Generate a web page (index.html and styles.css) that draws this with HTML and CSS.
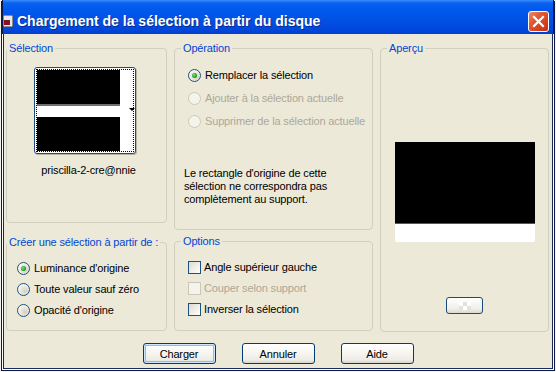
FILE: index.html
```html
<!DOCTYPE html>
<html lang="fr">
<head>
<meta charset="utf-8">
<title>Chargement de la sélection à partir du disque</title>
<link rel="stylesheet" href="styles.css">
</head>
<body>
<div class="window">
  <div class="titlebar">
    <svg class="app-icon" width="10" height="12" viewBox="0 0 10 12">
      <rect x="0" y="0" width="10" height="12" fill="#e8e8f0" stroke="#333" stroke-width="1"/>
      <rect x="1" y="5" width="6" height="5" fill="#8a1020"/>
    </svg>
    <span class="title">Chargement de la sélection à partir du disque</span>
    <button class="close" aria-label="Fermer">
      <svg width="13" height="13" viewBox="0 0 13 13"><path d="M2 2 L11 11 M11 2 L2 11" stroke="#fff" stroke-width="2.2" stroke-linecap="square"/></svg>
    </button>
  </div>

  <div class="content">
    <div class="col">
      <fieldset class="group g-selection">
        <legend>Sélection</legend>
        <div class="thumb">
          <div class="thumb-focus">
            <div class="thumb-img">
              <div class="blk"></div>
              <div class="gap"></div>
              <div class="blk"></div>
            </div>
            <div class="thumb-side"><span class="arrow"></span></div>
          </div>
        </div>
        <div class="thumb-name">priscilla-2-cre@nnie</div>
      </fieldset>

      <fieldset class="group g-create">
        <legend>Créer une sélection à partir de :</legend>
        <div class="opts tight">
          <label class="opt"><span class="radio checked"></span>Luminance d'origine</label>
          <label class="opt"><span class="radio"></span>Toute valeur sauf zéro</label>
          <label class="opt"><span class="radio"></span>Opacité d'origine</label>
        </div>
      </fieldset>
    </div>

    <div class="col">
      <fieldset class="group g-operation">
        <legend>Opération</legend>
        <div class="opts wide">
          <label class="opt"><span class="radio checked"></span>Remplacer la sélection</label>
          <label class="opt disabled"><span class="radio"></span>Ajouter à la sélection actuelle</label>
          <label class="opt disabled"><span class="radio"></span>Supprimer de la sélection actuelle</label>
        </div>
        <p class="note">Le rectangle d'origine de cette sélection ne correspondra pas complètement au support.</p>
      </fieldset>

      <fieldset class="group g-options">
        <legend>Options</legend>
        <div class="opts tight">
          <label class="opt"><span class="check"></span>Angle supérieur gauche</label>
          <label class="opt disabled"><span class="check"></span>Couper selon support</label>
          <label class="opt"><span class="check"></span>Inverser la sélection</label>
        </div>
      </fieldset>
    </div>

    <div class="col">
      <fieldset class="group g-preview">
        <legend>Aperçu</legend>
        <div class="preview">
          <div class="preview-black"></div>
          <div class="preview-white"></div>
        </div>
        <button class="mini" aria-label="Arrière-plan"><span class="checker"></span></button>
      </fieldset>
    </div>
  </div>

  <div class="buttons">
    <button class="btn default">Charger</button>
    <button class="btn">Annuler</button>
    <button class="btn">Aide</button>
  </div>
</div>
</body>
</html>
```

FILE: styles.css
```css
* { box-sizing: border-box; }

html, body {
  margin: 0;
  padding: 0;
  background: #ece9d8;
}

body {
  font-family: "Liberation Sans", Arial, sans-serif;
  font-size: 11px;
  letter-spacing: -0.15px;
  color: #000;
}

.window {
  width: 556px;
  height: 372px;
  background: #ece9d8;
  padding: 0 4px 4px 4px;
  box-shadow:
    inset 0 0 0 1px #f4f3ee,
    inset 0 0 0 2px #0b1a4a,
    inset 0 0 0 3px #ffffff,
    inset 0 0 0 4px #1a2a5a;
  display: flex;
  flex-direction: column;
}

.titlebar {
  height: 34px;
  margin: 0 -2px;
  background: linear-gradient(#3a8cff 0px, #0a62f0 3px, #0058ee 9px, #0054e6 50%, #004ae0 80%, #0040d0 100%);
  display: flex;
  align-items: center;
  padding: 8px 4px 0 0;
  color: #fff;
  border-left: 1px solid #0b1a4a;
  border-right: 1px solid #0b1a4a;
}

.app-icon {
  margin-left: 0;
  margin-right: 4px;
  flex: none;
}

.title {
  font-family: "Liberation Sans", Arial, sans-serif;
  font-weight: bold;
  font-size: 14px;
  letter-spacing: 0;
  text-shadow: 1px 1px 0 #0a2a8a;
  flex: 1;
  white-space: nowrap;
}

.close {
  width: 21px;
  height: 21px;
  margin-right: 0;
  padding: 0;
  border: 1px solid #fff;
  border-radius: 3px;
  background: linear-gradient(135deg, #f08a6c 0%, #e25a36 35%, #d4401c 70%, #c03010 100%);
  display: flex;
  align-items: center;
  justify-content: center;
}

.content {
  display: grid;
  grid-template-columns: 161px 199px 169px;
  column-gap: 7px;
  padding: 8px 0 0 2px;
}

.col {
  display: flex;
  flex-direction: column;
}

.group {
  margin: 0;
  padding: 0;
  min-width: 0;
  border: 1px solid #d0d0bf;
  border-radius: 4px;
}

.group legend {
  color: #0046d5;
  padding: 0 2px;
  margin-left: 0;
  line-height: 13px;
  white-space: nowrap;
}

.g-selection { height: 181px; display: flex; flex-direction: column; align-items: center; }
.g-create    { height: 95px; margin-top: 13px; padding: 13px 0 0 10px; }
.g-create legend { margin-left: -10px; }
.g-operation { height: 188px; padding: 14px 0 0 13px; }
.g-operation legend, .g-options legend { margin-left: -7px; }
.g-options   { height: 96px; margin-top: 5px; padding: 13px 0 0 13px; }
.g-preview   { height: 290px; }
.g-preview legend { margin-left: 6px; }

/* thumbnail */
.thumb {
  margin-top: 12px;
  margin-right: 3px;
  width: 102px;
  height: 87px;
  border: 1px solid #24487a;
  border-radius: 3px;
  background: #fff;
  padding: 1px;
  box-shadow: 1px 1px 0 #b8b4a4;
}
.thumb-focus {
  height: 100%;
  border: 1px dotted #000;
  display: flex;
}
.thumb-img {
  width: 83px;
  display: flex;
  flex-direction: column;
}
.blk { background: #000; height: 34px; }
.gap { flex: 1; background: #fff; border-top: 2px solid #707070; }
.thumb-side {
  flex: 1;
  position: relative;
  background: linear-gradient(90deg, #fff 0, #fff 8px, #f4f4f4 100%);
}
.arrow {
  position: absolute;
  left: 9px;
  top: 38px;
  width: 0;
  height: 0;
  border-left: 3px solid transparent;
  border-right: 3px solid transparent;
  border-top: 3px solid #000;
}
.thumb-name {
  margin-top: 10px;
  margin-left: 4px;
  line-height: 13px;
}

/* options */
.opts {
  display: flex;
  flex-direction: column;
}
.opts.tight { row-gap: 8px; }
.opts.wide { row-gap: 10px; }

.opt {
  display: flex;
  align-items: center;
  height: 13px;
  line-height: 13px;
  white-space: nowrap;
}
.opt.disabled { color: #aca899; }

.radio {
  width: 13px;
  height: 13px;
  border-radius: 50%;
  border: 1px solid #1c5180;
  background: radial-gradient(circle at 65% 65%, #d4d0c0 0%, #ecebe4 50%, #ffffff 90%);
  margin-right: 4px;
  flex: none;
  display: flex;
  align-items: center;
  justify-content: center;
}
.radio.checked::after {
  content: "";
  width: 5px;
  height: 5px;
  border-radius: 50%;
  background: radial-gradient(circle at 40% 40%, #7be37b 0%, #21a121 60%, #1a8a1a 100%);
}
.opt.disabled .radio,
.opt.disabled .check {
  border-color: #cac8bb;
  background: #f5f4ea;
}

.check {
  width: 13px;
  height: 13px;
  border: 1px solid #1c5180;
  background: linear-gradient(135deg, #dcdad0 0%, #f2f1ea 60%, #ffffff 100%);
  margin-right: 3px;
  flex: none;
}

.note {
  margin: 39px 0 0 -4px;
  line-height: 13px;
  width: 180px;
}

/* preview */
.g-preview {
  display: flex;
  flex-direction: column;
  align-items: center;
}
.preview {
  margin-top: 87px;
  width: 140px;
}
.preview-black { height: 82px; background: #000; border-bottom: 1px solid #555; }
.preview-white { height: 18px; background: #fff; border-radius: 0 0 2px 2px; }

.mini {
  margin-top: 55px;
  width: 37px;
  height: 17px;
  padding: 0;
  border: 1px solid #1f4a7c;
  border-radius: 3px;
  background: linear-gradient(#ffffff, #f0efe8 70%, #dcdad0);
  display: flex;
  align-items: center;
  justify-content: center;
}
.checker {
  width: 12px;
  height: 8px;
  background:
    linear-gradient(#fff, #fff) 0 0 / 4px 4px no-repeat,
    linear-gradient(#fff, #fff) 8px 0 / 4px 4px no-repeat,
    linear-gradient(#fff, #fff) 4px 4px / 4px 4px no-repeat,
    #e4e2da;
}

/* dialog buttons */
.buttons {
  display: flex;
  justify-content: center;
  column-gap: 26px;
  margin-top: 11px;
}
.btn {
  width: 73px;
  height: 21px;
  padding: 0;
  font-family: "Liberation Sans", Arial, sans-serif;
  font-size: 11px;
  letter-spacing: -0.15px;
  color: #000;
  border: 1px solid #003c74;
  border-radius: 3px;
  background: linear-gradient(#ffffff 0%, #f6f5f0 50%, #ecebe4 85%, #d8d6cc 100%);
}
.btn.default {
  box-shadow: inset 0 0 0 1px #cee7ff, inset 0 0 0 2px #98b8ea;
}
```
